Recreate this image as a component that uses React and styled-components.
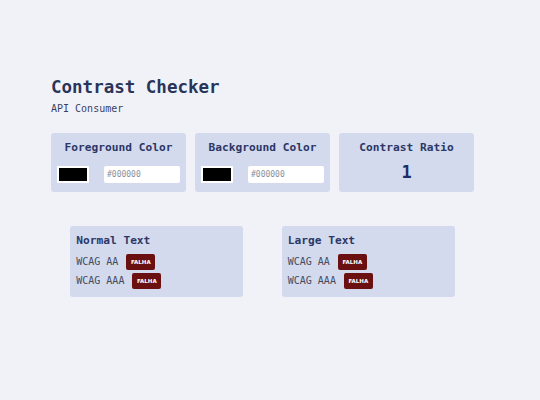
import React from 'react'
import styled, { createGlobalStyle } from 'styled-components'

//#region styled css
const GlobalStyle = createGlobalStyle`
    body {
        margin: 0;
        background: #f0f2f8;
        font-family: "DejaVu Sans Mono", "Liberation Mono", monospace;
    }
`;

const Page = styled.div`
    width: 423px;
    padding: 76px 0 0 51px;
`;

const Title = styled.h1`
    margin: 0;
    font-size: 17.5px;
    line-height: 22px;
    font-weight: bold;
    color: #2a3458;
`;

const Subtitle = styled.p`
    margin: 4px 0 0;
    font-size: 10px;
    line-height: 14px;
    color: #3a4264;
`;

const TopRow = styled.div`
    display: grid;
    grid-template-columns: repeat(3, 135px);
    gap: 9px;
    margin-top: 17px;
`;

const Card = styled.div`
    background: #d3daee;
    border-radius: 3px;
    padding: ${p => p.$pad || '8px 6px 9px'};
    box-sizing: border-box;
    height: ${p => p.$h || 'auto'};
`;

const CardTitle = styled.div`
    font-size: 11.2px;
    line-height: 14px;
    font-weight: bold;
    color: #2c3766;
    text-align: ${p => p.$left ? 'left' : 'center'};
`;

const PickRow = styled.div`
    display: flex;
    justify-content: space-between;
    align-items: center;
    margin-top: 11px;
`;

const Swatch = styled.div`
    width: 28px;
    height: 13px;
    border: 2px solid #fff;
    background: #000;
`;

const HexInput = styled.input`
    width: 76px;
    height: 17px;
    box-sizing: border-box;
    border: none;
    border-radius: 2px;
    background: #fff;
    padding: 0 3px;
    font-family: inherit;
    font-size: 8px;
    color: #8a8f9e;
    outline: none;
`;

const Ratio = styled.div`
    margin-top: 8px;
    text-align: center;
    font-size: 17px;
    line-height: 18px;
    font-weight: bold;
    color: #1e2d68;
`;

const BottomRow = styled.div`
    display: flex;
    justify-content: space-around;
    margin-top: 34px;
`;

const ResultCard = styled(Card)`
    width: 173px;
`;

const Check = styled.div`
    display: flex;
    align-items: center;
    margin-top: ${p => p.$first ? '6px' : '3px'};
    font-size: 10px;
    line-height: 16px;
    color: #454a5c;
`;

const Badge = styled.span`
    margin-left: 8px;
    background: #6a1010;
    color: #fff;
    border-radius: 2px;
    font-family: "DejaVu Sans", "Liberation Sans", sans-serif;
    font-weight: bold;
    font-size: 5.5px;
    line-height: 16px;
    padding: 0 4.5px;
`;
//#endregion

const colors = [
    { label: "Foreground Color", value: "#000000" },
    { label: "Background Color", value: "#000000" },
];

function ResultBox({ title }) {
    return (
        <ResultCard $pad="8px 6px 8px">
            <CardTitle $left>{title}</CardTitle>
            <Check $first>WCAG AA<Badge>FALHA</Badge></Check>
            <Check>WCAG AAA<Badge>FALHA</Badge></Check>
        </ResultCard>
    )
}

function App() {
    return (
        <>
            <GlobalStyle />
            <Page>
                <Title>Contrast Checker</Title>
                <Subtitle>API Consumer</Subtitle>

                <TopRow>
                    {colors.map(c => (
                        <Card key={c.label}>
                            <CardTitle>{c.label}</CardTitle>
                            <PickRow>
                                <Swatch />
                                <HexInput defaultValue={c.value} />
                            </PickRow>
                        </Card>
                    ))}
                    <Card>
                        <CardTitle>Contrast Ratio</CardTitle>
                        <Ratio>1</Ratio>
                    </Card>
                </TopRow>

                <BottomRow>
                    <ResultBox title="Normal Text" />
                    <ResultBox title="Large Text" />
                </BottomRow>
            </Page>
        </>
    )
}

export default App
